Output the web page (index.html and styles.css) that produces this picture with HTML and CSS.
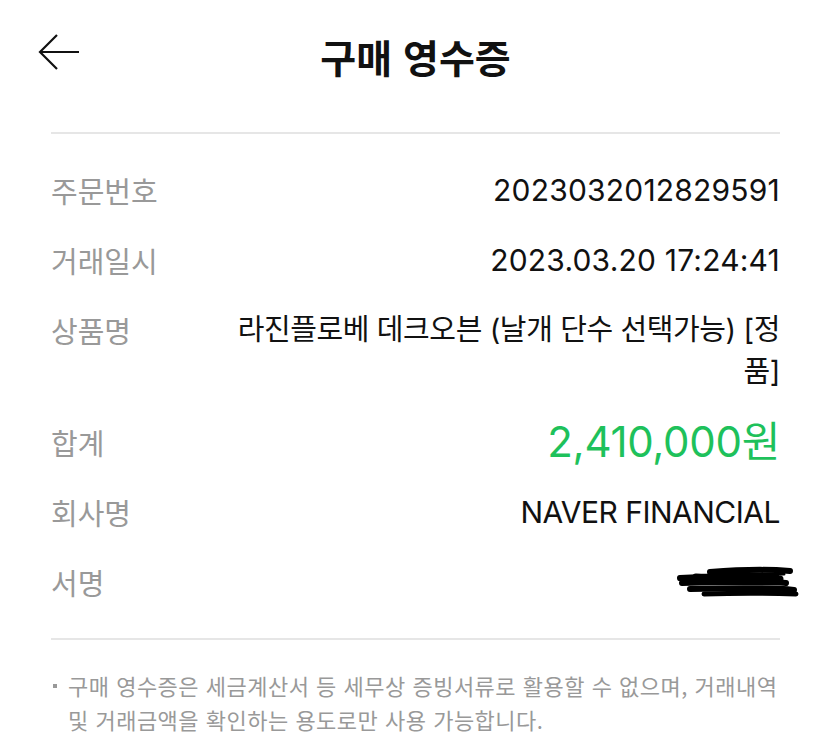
FILE: index.html
```html
<!DOCTYPE html>
<html lang="ko">

<head>
  <meta charset="UTF-8">
  <meta name="viewport" content="width=device-width, initial-scale=1.0">
  <title>구매 영수증</title>
  <link rel="stylesheet" href="styles.css">
</head>

<body>
  <header class="topbar">
    <button class="back-btn" aria-label="뒤로">
      <svg width="44" height="40" viewBox="0 0 44 40">
        <path d="M41 18H2M19 1L2 18L19 35" fill="none" stroke="#111" stroke-width="2.2" />
      </svg>
    </button>
    <h1>구매 영수증</h1>
    <span></span>
  </header>

  <div class="receipt">
    <div class="row">
      <span class="label">주문번호</span>
      <span class="value">2023032012829591</span>
    </div>
    <div class="row">
      <span class="label">거래일시</span>
      <span class="value">2023.03.20 17:24:41</span>
    </div>
    <div class="row">
      <span class="label">상품명</span>
      <span class="value name">라진플로베 데크오븐 (날개 단수 선택가능) [정<br>품]</span>
    </div>
    <div class="row">
      <span class="label">합계</span>
      <span class="value total">2,410,000원</span>
    </div>
    <div class="row">
      <span class="label">회사명</span>
      <span class="value company">NAVER FINANCIAL</span>
    </div>
    <div class="row">
      <span class="label">서명</span>
      <span class="value sign">
        <svg width="124" height="42" viewBox="0 0 124 42">
          <g fill="none" stroke="#000" stroke-linecap="round">
            <path d="M34 11C60 9 90 8 114 10" stroke-width="6" />
            <path d="M4 17C40 15 80 14 100 15" stroke-width="6" />
            <path d="M20 16C50 18 80 17 104 18" stroke-width="7" />
            <path d="M6 22C40 21 80 20 110 22" stroke-width="6" />
            <path d="M14 28C50 27 90 26 118 29" stroke-width="6" />
            <path d="M28 33C60 32 90 32 120 33" stroke-width="5" />
            <path d="M40 13C60 14 90 13 108 13" stroke-width="3" />
          </g>
        </svg>
      </span>
    </div>
  </div>

  <p class="notice">구매 영수증은 세금계산서 등 세무상 증빙서류로 활용할 수 없으며, 거래내역 및 거래금액을 확인하는 용도로만 사용 가능합니다.</p>
</body>

</html>
```

FILE: styles.css
```css
body {
  margin: 0;
  background: #fff;
  color: #111;
  font-family: Inter, 'Noto Sans CJK KR', sans-serif;
}

.topbar {
  display: grid;
  grid-template-columns: 1fr auto 1fr;
  align-items: center;
  height: 112px;
  padding: 0 38px;
}

.back-btn {
  justify-self: start;
  background: none;
  border: none;
  padding: 0;
  margin-top: -4px;
  display: flex;
  cursor: pointer;
}

.topbar h1 {
  margin: 0;
  font-family: 'Noto Sans CJK KR', sans-serif;
  font-size: 39px;
  font-weight: 700;
  letter-spacing: 0;
}

.receipt {
  margin: 20px 51px 0;
  padding: 21px 0;
  border-top: 2px solid #e6e6e6;
  border-bottom: 2px solid #e6e6e6;
}

.row {
  display: flex;
  justify-content: space-between;
  align-items: flex-start;
  padding: 14px 0;
  line-height: 42px;
}

.label {
  flex: 0 0 150px;
  font-family: 'Noto Sans CJK KR', sans-serif;
  font-size: 29px;
  font-weight: 400;
  color: #999;
}

.value {
  flex: 1;
  text-align: right;
  font-size: 30px;
  color: #111;
  letter-spacing: 0.2px;
}

.value.name {
  font-size: 29px;
  letter-spacing: -0.4px;
}

.value.company {
  letter-spacing: -0.5px;
}

.value.total {
  font-size: 42px;
  letter-spacing: -0.3px;
  color: #1ec15b;
}

.value.sign {
  display: flex;
  justify-content: flex-end;
  align-items: center;
  height: 42px;
  margin-right: -20px;
}

.notice {
  position: relative;
  margin: 28px 51px 0;
  padding-left: 17px;
  font-family: 'Noto Sans CJK KR', sans-serif;
  font-size: 22px;
  line-height: 34px;
  color: #999;
  letter-spacing: 0.5px;
  word-break: keep-all;
}

.notice::before {
  content: '';
  position: absolute;
  left: 2px;
  top: 16px;
  width: 4px;
  height: 4px;
  background: #999;
}
```
